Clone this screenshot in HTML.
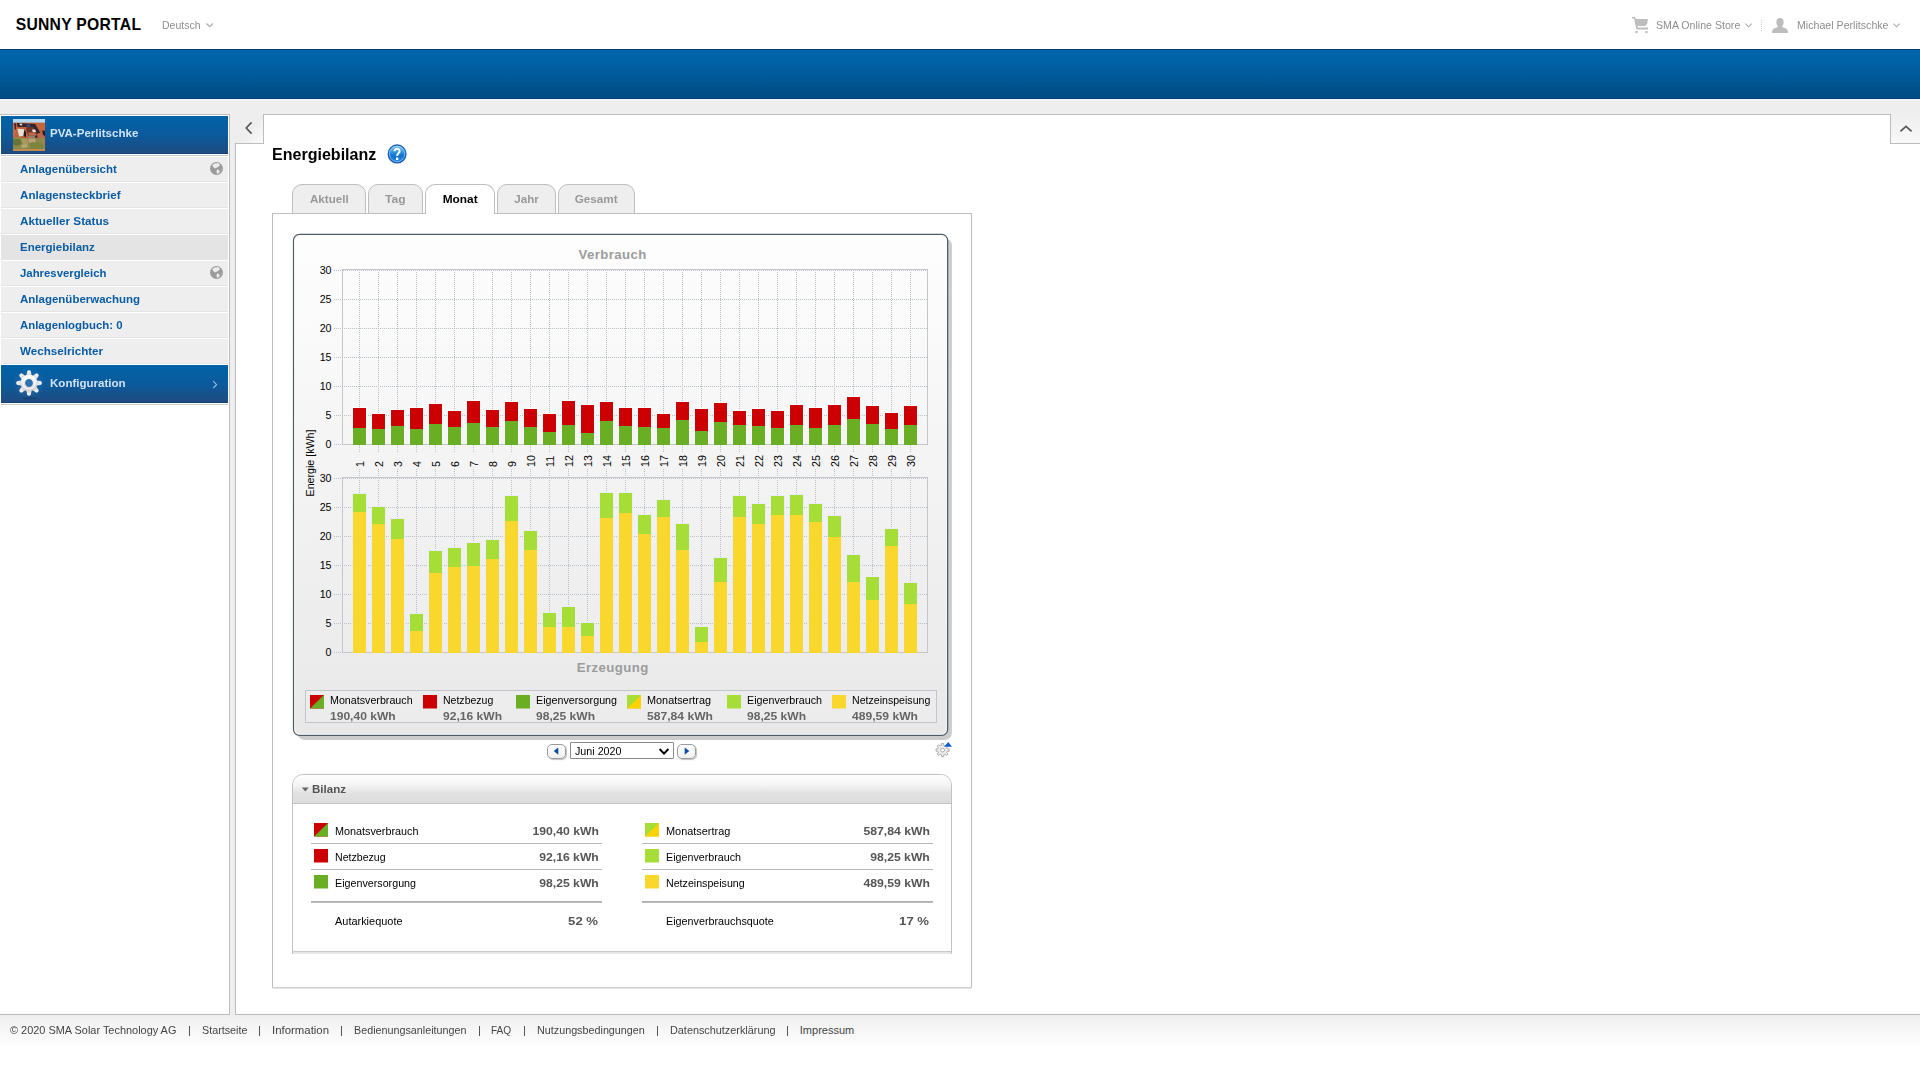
<!DOCTYPE html>
<html lang="de"><head><meta charset="utf-8"><title>Sunny Portal - Energiebilanz</title>
<style>
html,body{margin:0;padding:0;}
body{width:1920px;height:1080px;overflow:hidden;background:#fff;font-family:"Liberation Sans", sans-serif;position:relative;}
.a{position:absolute;box-sizing:border-box;}
.t{position:absolute;white-space:nowrap;font-family:"Liberation Sans", sans-serif;}
svg{position:absolute;overflow:visible;}
</style></head><body>
<div class="a" style="left:0px;top:99px;width:1920px;height:916px;background:#eeeeee;"></div>
<div class="t" style="left:15.70px;transform-origin:0 0;top:17.31px;font-size:15.7px;line-height:15.7px;font-weight:bold;color:#000;letter-spacing:0.27px;">SUNNY PORTAL</div>
<div class="t" style="left:162.00px;transform-origin:0 0;top:20.19px;font-size:11px;line-height:11px;font-weight:normal;color:#8e8e8e;transform:scaleX(0.9541);">Deutsch</div>
<svg style="left:205px;top:21px" width="10" height="8" viewBox="0 0 10 8"><path d="M1.5 2.5 L4.7 5.7 L7.9 2.5" fill="none" stroke="#aaa" stroke-width="1.1"/></svg>
<svg style="left:1631px;top:16px" width="18" height="18" viewBox="0 0 18 18"><g fill="#bdbdbd">
<path d="M1 1 H4.2 L4.9 3.1 H17 L16.2 7.6 Q15.6 9.9 13.6 9.9 H6.5 L6.9 11.6 H17 V13.6 H5.5 L3 2.6 H1 Z"/>
<rect x="4.4" y="15" width="2.3" height="2.2" rx=".6"/><rect x="14.3" y="15" width="2.3" height="2.2" rx=".6"/></g></svg>
<div class="t" style="left:1656.20px;transform-origin:0 0;top:19.69px;font-size:11px;line-height:11px;font-weight:normal;color:#8e8e8e;transform:scaleX(0.9642);">SMA Online Store</div>
<svg style="left:1744px;top:21px" width="10" height="8" viewBox="0 0 10 8"><path d="M1.5 2.7 L4.6 5.8 L7.7 2.7" fill="none" stroke="#aaa" stroke-width="1.1"/></svg>
<div class="a" style="left:1761px;top:20px;width:1px;height:11px;background:repeating-linear-gradient(to bottom,#ccc 0,#ccc 1px,transparent 1px,transparent 2px);"></div>
<svg style="left:1771px;top:17px" width="18" height="17" viewBox="0 0 18 17"><g fill="#bdbdbd">
<ellipse cx="9" cy="5.3" rx="3.6" ry="4.3"/>
<path d="M1 16 C1 12 3 11.2 6.4 10.2 L7 8 H11 L11.6 10.2 C15 11.2 17 12 17 16 Z"/></g></svg>
<div class="t" style="left:1796.80px;transform-origin:0 0;top:19.69px;font-size:11px;line-height:11px;font-weight:normal;color:#8e8e8e;transform:scaleX(0.9657);">Michael Perlitschke</div>
<svg style="left:1892px;top:21px" width="10" height="8" viewBox="0 0 10 8"><path d="M1.5 2.7 L4.6 5.8 L7.7 2.7" fill="none" stroke="#aaa" stroke-width="1.1"/></svg>
<div class="a" style="left:0px;top:49px;width:1920px;height:50px;background:linear-gradient(to bottom,#0065aa 0,#0061a4 30%,#004a82 100%);border-top:1px solid #003c72;border-bottom:1px solid #003a70;"></div>
<div class="a" style="left:0px;top:99px;width:1920px;height:1px;background:#f9f8f6;"></div>
<div class="a" style="left:0px;top:114px;width:230px;height:901px;background:#fff;border:1px solid #bdbdbd;border-left:none;"></div>
<div class="a" style="left:1px;top:116px;width:227px;height:38px;background:linear-gradient(to bottom,#0062a7 0,#0b5a9c 50%,#1e4b81 96%,#0f3a70 100%);"></div>
<svg style="left:13px;top:119px;overflow:hidden" width="32" height="32" viewBox="0 0 32 32">
<defs><filter id="bl" x="-10%" y="-10%" width="120%" height="120%"><feGaussianBlur stdDeviation="0.55"/></filter>
<clipPath id="tc"><rect width="32" height="32"/></clipPath></defs>
<g clip-path="url(#tc)"><g filter="url(#bl)">
<rect x="-2" y="-2" width="36" height="36" fill="#c0623c"/>
<rect x="-2" y="-2" width="36" height="5.6" fill="#b6daf4"/>
<path d="M22 5 L34 4.5 L34 12 L28 11 Z" fill="#c8643a"/>
<path d="M-1 4 L4 4 L3 12 L-1 20 Z" fill="#cc6a40"/>
<path d="M1 4.2 L3.2 4.2 L3 10.8 L1.8 10.5 Z" fill="#4a2820"/>
<path d="M3.9 4 L22.2 5.1 L27.2 13.7 L24.5 14.9 L19.8 7.9 L4.7 7.9 Z" fill="#33282e"/>
<path d="M6.5 4.6 L9.2 4.8 L9 6.4 L7 6.3 Z" fill="#e8dcdc"/>
<path d="M13.5 5.2 L17 5.4 L17.4 8.6 L14 8.4 Z" fill="#3c4c78"/>
<path d="M13.6 7.9 L19.8 7.9 L24.5 14.9 L22.2 18.4 L15.2 16.8 L13.2 10.6 Z" fill="#6a3428"/>
<path d="M19 10.6 L22.2 10.6 L23 12.9 L19.8 13.3 Z" fill="#f2e4e4"/>
<path d="M15 13.6 L22 13.4 L23.5 16 L16 16.6 Z" fill="#c86848"/>
<path d="M15.5 16.5 L23 16.2 L23.4 18.4 L16 18.6 Z" fill="#8a8478"/>
<path d="M4.3 9.8 L11.3 10.2 L10.5 16.8 L6.2 17.6 Z" fill="#e6e2da"/>
<path d="M11.3 10.6 L13.2 13.7 L12.8 18.4 L10.5 16.8 Z" fill="#241c22"/>
<path d="M22 17 L24 16.4 L24.6 18.6 L22.6 18.8 Z" fill="#2a1c1c"/>
<path d="M29.2 11.4 L33 12.1 L33 18.4 L30 15.3 Z" fill="#2a1a1a"/>
<path d="M24.5 14.9 L27.2 13.7 L31 20 L27 20 Z" fill="#b86a50"/>
<path d="M-1 19 L6 18 L12 19.5 L20 19 L27 19.6 L33 19 L33 31 L-1 31 Z" fill="#8c8a4c"/>
<path d="M0 20 L7 20 L9 25 L3 27 L0 25 Z" fill="#6a7434"/>
<path d="M8 19 L14 20 L15 25 L10 26 Z" fill="#a89a5c"/>
<path d="M15 19.5 L22 19.4 L23 23 L16 24 Z" fill="#b89e78"/>
<path d="M16 24 L25 23 L31 26 L30 30 L18 30 Z" fill="#7c8440"/>
<path d="M30 20 L33 20 L33 27 L30.5 26 Z" fill="#c07848"/>
<path d="M8 26 L14 25 L15 28 L9 29 Z" fill="#b4a878"/>
<rect x="-2" y="30" width="36" height="4" fill="#c48a4c"/>
</g></g></svg>
<div class="t" style="left:50.40px;transform-origin:0 0;top:128.49px;font-size:11px;line-height:11px;font-weight:bold;color:#d0e4f6;transform:scaleX(1.0492);">PVA-Perlitschke</div>
<div class="a" style="left:1px;top:157px;width:227px;height:24px;background:#eeeeee;"></div>
<div class="a" style="left:1px;top:181px;width:227px;height:1px;background:#e4e4e4;"></div>
<div class="t" style="left:20.10px;transform-origin:0 0;top:163.59px;font-size:11px;line-height:11px;font-weight:bold;color:#0a5ca5;transform:scaleX(1.0420);">Anlagenübersicht</div>
<div class="a" style="left:1px;top:183px;width:227px;height:24px;background:#eeeeee;"></div>
<div class="a" style="left:1px;top:207px;width:227px;height:1px;background:#e4e4e4;"></div>
<div class="t" style="left:20.10px;transform-origin:0 0;top:189.59px;font-size:11px;line-height:11px;font-weight:bold;color:#0a5ca5;transform:scaleX(1.0550);">Anlagensteckbrief</div>
<div class="a" style="left:1px;top:209px;width:227px;height:24px;background:#eeeeee;"></div>
<div class="a" style="left:1px;top:233px;width:227px;height:1px;background:#e4e4e4;"></div>
<div class="t" style="left:20.10px;transform-origin:0 0;top:215.59px;font-size:11px;line-height:11px;font-weight:bold;color:#0a5ca5;transform:scaleX(1.0640);">Aktueller Status</div>
<div class="a" style="left:1px;top:235px;width:227px;height:24px;background:#e4e4e4;"></div>
<div class="a" style="left:1px;top:259px;width:227px;height:1px;background:#e4e4e4;"></div>
<div class="t" style="left:20.10px;transform-origin:0 0;top:241.59px;font-size:11px;line-height:11px;font-weight:bold;color:#0a5ca5;transform:scaleX(1.0460);">Energiebilanz</div>
<div class="a" style="left:1px;top:261px;width:227px;height:24px;background:#eeeeee;"></div>
<div class="a" style="left:1px;top:285px;width:227px;height:1px;background:#e4e4e4;"></div>
<div class="t" style="left:20.10px;transform-origin:0 0;top:267.59px;font-size:11px;line-height:11px;font-weight:bold;color:#0a5ca5;transform:scaleX(1.0326);">Jahresvergleich</div>
<div class="a" style="left:1px;top:287px;width:227px;height:24px;background:#eeeeee;"></div>
<div class="a" style="left:1px;top:311px;width:227px;height:1px;background:#e4e4e4;"></div>
<div class="t" style="left:20.10px;transform-origin:0 0;top:293.59px;font-size:11px;line-height:11px;font-weight:bold;color:#0a5ca5;transform:scaleX(1.0453);">Anlagenüberwachung</div>
<div class="a" style="left:1px;top:313px;width:227px;height:24px;background:#eeeeee;"></div>
<div class="a" style="left:1px;top:337px;width:227px;height:1px;background:#e4e4e4;"></div>
<div class="t" style="left:20.10px;transform-origin:0 0;top:319.59px;font-size:11px;line-height:11px;font-weight:bold;color:#0a5ca5;transform:scaleX(1.0354);">Anlagenlogbuch: 0</div>
<div class="a" style="left:1px;top:339px;width:227px;height:24px;background:#eeeeee;"></div>
<div class="a" style="left:1px;top:363px;width:227px;height:1px;background:#e4e4e4;"></div>
<div class="t" style="left:20.10px;transform-origin:0 0;top:345.59px;font-size:11px;line-height:11px;font-weight:bold;color:#0a5ca5;transform:scaleX(1.0564);">Wechselrichter</div>
<div class="a" style="left:1px;top:155px;width:227px;height:1px;background:#c8c8c8;"></div>
<svg style="left:210px;top:162px" width="13" height="13" viewBox="0 0 13 13"><circle cx="6.5" cy="6.5" r="6.5" fill="#9b9b9b"/>
<path d="M2.3 2.9 L4.6 1.6 L8.3 0.9 L10.2 3.2 L7.2 5.6 L4.8 6.6 L3 4.8 Z" fill="#ececec"/>
<path d="M7 7.3 L9.8 8.8 L9.3 10.7 L7 12.1 L6.5 9.7 Z" fill="#ececec"/>
<path d="M11.3 6 L12 7 L11.5 8 Z" fill="#cfcfcf"/></svg>
<svg style="left:210px;top:266px" width="13" height="13" viewBox="0 0 13 13"><circle cx="6.5" cy="6.5" r="6.5" fill="#9b9b9b"/>
<path d="M2.3 2.9 L4.6 1.6 L8.3 0.9 L10.2 3.2 L7.2 5.6 L4.8 6.6 L3 4.8 Z" fill="#ececec"/>
<path d="M7 7.3 L9.8 8.8 L9.3 10.7 L7 12.1 L6.5 9.7 Z" fill="#ececec"/>
<path d="M11.3 6 L12 7 L11.5 8 Z" fill="#cfcfcf"/></svg>
<div class="a" style="left:1px;top:365px;width:227px;height:38px;background:linear-gradient(to bottom,#0062a7 0,#0b5a9c 50%,#1e4b81 96%,#0f3a70 100%);"></div>
<div class="a" style="left:1px;top:404px;width:227px;height:1px;background:#c8c8c8;"></div>
<svg style="left:13px;top:367px" width="32" height="34" viewBox="-16 -16 32 34">
<defs><linearGradient id="gg" x1="0" y1="0" x2="0" y2="1"><stop offset="0" stop-color="#ffffff"/><stop offset="1" stop-color="#cfcfcf"/></linearGradient>
<radialGradient id="gs"><stop offset="0" stop-color="#4f86c0" stop-opacity=".6"/><stop offset="1" stop-color="#4f86c0" stop-opacity="0"/></radialGradient></defs>
<circle r="16" fill="url(#gs)"/>
<ellipse cx="0.5" cy="15.2" rx="7" ry="1" fill="#0a2f5c" opacity=".35"/>
<g fill="url(#gg)"><path d="M-2.7 -7 L-1.7 -12.1 Q0 -13.6 1.7 -12.1 L2.7 -7 Z" transform="rotate(0)"/><path d="M-2.7 -7 L-1.7 -12.1 Q0 -13.6 1.7 -12.1 L2.7 -7 Z" transform="rotate(45)"/><path d="M-2.7 -7 L-1.7 -12.1 Q0 -13.6 1.7 -12.1 L2.7 -7 Z" transform="rotate(90)"/><path d="M-2.7 -7 L-1.7 -12.1 Q0 -13.6 1.7 -12.1 L2.7 -7 Z" transform="rotate(135)"/><path d="M-2.7 -7 L-1.7 -12.1 Q0 -13.6 1.7 -12.1 L2.7 -7 Z" transform="rotate(180)"/><path d="M-2.7 -7 L-1.7 -12.1 Q0 -13.6 1.7 -12.1 L2.7 -7 Z" transform="rotate(225)"/><path d="M-2.7 -7 L-1.7 -12.1 Q0 -13.6 1.7 -12.1 L2.7 -7 Z" transform="rotate(270)"/><path d="M-2.7 -7 L-1.7 -12.1 Q0 -13.6 1.7 -12.1 L2.7 -7 Z" transform="rotate(315)"/><path d="M0 -8.3 A8.3 8.3 0 1 0 0.01 -8.3 Z M0 -3.9 A3.9 3.9 0 1 1 -0.01 -3.9 Z" fill-rule="evenodd"/></g>
<circle r="6" fill="none" stroke="#fff" stroke-width="1.2" opacity=".7"/>
</svg>
<div class="t" style="left:50.40px;transform-origin:0 0;top:378.29px;font-size:11px;line-height:11px;font-weight:bold;color:#d0e4f6;transform:scaleX(1.0487);">Konfiguration</div>
<svg style="left:210px;top:379px" width="10" height="12" viewBox="0 0 10 12"><path d="M3.2 2.2 L6.6 5.7 L3.2 9.2" fill="none" stroke="#9fc0e0" stroke-width="1.1"/></svg>
<div class="a" style="left:263px;top:114px;width:1657px;height:901px;background:#fff;border-top:1px solid #bdbdbd;"></div>
<div class="a" style="left:235px;top:143px;width:29px;height:872px;background:#fff;border-left:1px solid #bdbdbd;border-top:1px solid #bdbdbd;"></div>
<div class="a" style="left:236px;top:115px;width:27px;height:28px;background:linear-gradient(135deg,rgba(255,255,255,0) 55%,#fbfbfb 100%);"></div>
<div class="a" style="left:263px;top:114px;width:1px;height:30px;background:#bdbdbd;"></div>
<div class="a" style="left:235px;top:1014px;width:1685px;height:1px;background:#bdbdbd;"></div>
<div class="a" style="left:0px;top:1014px;width:230px;height:1px;background:#bdbdbd;"></div>
<div class="a" style="left:1890px;top:114px;width:30px;height:30px;background:linear-gradient(to bottom,#eeeeee,#f9f9f9);border-left:1px solid #bdbdbd;border-bottom:1px solid #bdbdbd;"></div>
<svg style="left:1898px;top:123px" width="16" height="12" viewBox="0 0 16 12"><path d="M2.4 8.4 L8 3.4 L13.6 8.4" fill="none" stroke="#555" stroke-width="1.6"/></svg>
<svg style="left:242px;top:120px" width="14" height="16" viewBox="0 0 14 16"><path d="M9.6 2.4 L4.2 8 L9.6 13.6" fill="none" stroke="#555" stroke-width="1.6"/></svg>
<div class="t" style="left:272.20px;transform-origin:0 0;top:145.61px;font-size:17px;line-height:17px;font-weight:bold;color:#000;transform:scaleX(0.9437);">Energiebilanz</div>
<svg style="left:386px;top:143px" width="22" height="22" viewBox="0 0 22 22">
<defs><linearGradient id="hq" x1="0" y1="0" x2="0" y2="1"><stop offset="0" stop-color="#9fdcfb"/><stop offset="0.3" stop-color="#45a4ea"/><stop offset="0.6" stop-color="#0f74cf"/><stop offset="1" stop-color="#2a86d8"/></linearGradient></defs>
<ellipse cx="11.1" cy="19.6" rx="7.5" ry="1.4" fill="#000" opacity=".07"/>
<circle cx="11.1" cy="10.9" r="8.9" fill="url(#hq)" stroke="#1d5db2" stroke-width="1.3"/>
<circle cx="11.1" cy="10.9" r="7.7" fill="none" stroke="#a8dcfa" stroke-width=".8" opacity=".75"/>
<path d="M8.6 8.2 C8.6 4.9 13.6 4.9 13.6 8 C13.6 10.2 11.1 10.3 11.1 12.9" fill="none" stroke="#1a4e90" stroke-width="2" opacity=".35" transform="translate(0,-0.5)"/>
<path d="M8.6 8.2 C8.6 4.9 13.6 4.9 13.6 8 C13.6 10.2 11.1 10.3 11.1 12.9" fill="none" stroke="#fff" stroke-width="2"/>
<rect x="10" y="14.6" width="2.3" height="2.4" rx=".5" fill="#fff"/></svg>
<div class="a" style="left:272px;top:213px;width:700px;height:775px;background:#fff;border:1px solid #bebebe;"></div>
<div class="a" style="left:273px;top:987px;width:698px;height:2px;background:linear-gradient(to bottom,#c8c8c8,#ececec);"></div>
<div class="a" style="left:292px;top:184px;width:74px;height:30px;background:#eeeeee;border:1px solid #bebebe;border-bottom:1px solid #bebebe;border-radius:10px 10px 0 0;"></div>
<div class="t" style="left:310.66px;transform-origin:50% 0;top:193.79px;font-size:11px;line-height:11px;font-weight:bold;color:#999;transform:scaleX(1.0580);">Aktuell</div>
<div class="a" style="left:368px;top:184px;width:55px;height:30px;background:#eeeeee;border:1px solid #bebebe;border-bottom:1px solid #bebebe;border-radius:10px 10px 0 0;"></div>
<div class="t" style="left:386.13px;transform-origin:50% 0;top:193.79px;font-size:11px;line-height:11px;font-weight:bold;color:#999;transform:scaleX(1.0994);">Tag</div>
<div class="a" style="left:425px;top:184px;width:70px;height:30px;background:#fff;border:1px solid #bebebe;border-bottom:none;border-radius:10px 10px 0 0;"></div>
<div class="t" style="left:443.81px;transform-origin:50% 0;top:193.79px;font-size:11px;line-height:11px;font-weight:bold;color:#000;transform:scaleX(1.0809);">Monat</div>
<div class="a" style="left:497px;top:184px;width:59px;height:30px;background:#eeeeee;border:1px solid #bebebe;border-bottom:1px solid #bebebe;border-radius:10px 10px 0 0;"></div>
<div class="t" style="left:514.88px;transform-origin:50% 0;top:193.79px;font-size:11px;line-height:11px;font-weight:bold;color:#999;transform:scaleX(1.0545);">Jahr</div>
<div class="a" style="left:558px;top:184px;width:77px;height:30px;background:#eeeeee;border:1px solid #bebebe;border-bottom:1px solid #bebebe;border-radius:10px 10px 0 0;"></div>
<div class="t" style="left:576.32px;transform-origin:50% 0;top:193.79px;font-size:11px;line-height:11px;font-weight:bold;color:#999;transform:scaleX(1.0656);">Gesamt</div>
<div class="a" style="left:0px;top:1015px;width:1920px;height:32px;background:linear-gradient(to bottom,#eeeeee 0,#f4f4f4 35%,#ffffff 100%);"></div>
<div class="t" style="left:10.30px;transform-origin:0 0;top:1024.99px;font-size:11px;line-height:11px;font-weight:normal;color:#444;transform:scaleX(0.9935);">© 2020 SMA Solar Technology AG</div>
<div class="a" style="left:189px;top:1026px;width:1px;height:10px;background:#555;"></div>
<div class="t" style="left:201.60px;transform-origin:0 0;top:1024.99px;font-size:11px;line-height:11px;font-weight:normal;color:#444;transform:scaleX(0.9771);">Startseite</div>
<div class="a" style="left:259px;top:1026px;width:1px;height:10px;background:#555;"></div>
<div class="t" style="left:272.00px;transform-origin:0 0;top:1024.99px;font-size:11px;line-height:11px;font-weight:normal;color:#444;transform:scaleX(1.0359);">Information</div>
<div class="a" style="left:341px;top:1026px;width:1px;height:10px;background:#555;"></div>
<div class="t" style="left:354.00px;transform-origin:0 0;top:1024.99px;font-size:11px;line-height:11px;font-weight:normal;color:#444;transform:scaleX(0.9784);">Bedienungsanleitungen</div>
<div class="a" style="left:479px;top:1026px;width:1px;height:10px;background:#555;"></div>
<div class="t" style="left:491.30px;transform-origin:0 0;top:1024.99px;font-size:11px;line-height:11px;font-weight:normal;color:#444;transform:scaleX(0.9180);">FAQ</div>
<div class="a" style="left:524px;top:1026px;width:1px;height:10px;background:#555;"></div>
<div class="t" style="left:536.80px;transform-origin:0 0;top:1024.99px;font-size:11px;line-height:11px;font-weight:normal;color:#444;transform:scaleX(0.9793);">Nutzungsbedingungen</div>
<div class="a" style="left:657px;top:1026px;width:1px;height:10px;background:#555;"></div>
<div class="t" style="left:669.50px;transform-origin:0 0;top:1024.99px;font-size:11px;line-height:11px;font-weight:normal;color:#444;transform:scaleX(0.9860);">Datenschutzerklärung</div>
<div class="a" style="left:787px;top:1026px;width:1px;height:10px;background:#555;"></div>
<div class="t" style="left:799.80px;transform-origin:0 0;top:1024.99px;font-size:11px;line-height:11px;font-weight:normal;color:#444;">Impressum</div>
<svg style="left:0;top:0" width="1920" height="1080" viewBox="0 0 1920 1080">
<defs><linearGradient id="pg" x1="0" y1="0" x2="0" y2="1"><stop offset="0" stop-color="#fefefe"/><stop offset="1" stop-color="#e8e8e8"/></linearGradient></defs>
<rect x="297.4" y="238.4" width="654.5" height="501.5" rx="7" fill="#cccccc"/>
<rect x="293.5" y="234.4" width="654.1" height="501" rx="6" fill="url(#pg)" stroke="#4e5b68" stroke-width="1.25"/><rect x="294.7" y="235.6" width="651.7" height="498.6" rx="5" fill="none" stroke="#fff" stroke-opacity=".6" stroke-width="1"/>
<g shape-rendering="crispEdges">
<rect x="342" y="269" width="586" height="176" fill="#ffffff" fill-opacity="0.06"/>
<rect x="342" y="477" width="586" height="176" fill="#ffffff" fill-opacity="0.06"/>
<line x1="334" y1="270.5" x2="341" y2="270.5" stroke="#bac0c7" stroke-width="1" stroke-dasharray="1 1"/>
<line x1="334" y1="299.5" x2="341" y2="299.5" stroke="#bac0c7" stroke-width="1" stroke-dasharray="1 1"/>
<line x1="344" y1="299.5" x2="927" y2="299.5" stroke="#bac0c7" stroke-width="1" stroke-dasharray="1 1"/>
<line x1="334" y1="328.5" x2="341" y2="328.5" stroke="#bac0c7" stroke-width="1" stroke-dasharray="1 1"/>
<line x1="344" y1="328.5" x2="927" y2="328.5" stroke="#bac0c7" stroke-width="1" stroke-dasharray="1 1"/>
<line x1="334" y1="357.5" x2="341" y2="357.5" stroke="#bac0c7" stroke-width="1" stroke-dasharray="1 1"/>
<line x1="344" y1="357.5" x2="927" y2="357.5" stroke="#bac0c7" stroke-width="1" stroke-dasharray="1 1"/>
<line x1="334" y1="386.5" x2="341" y2="386.5" stroke="#bac0c7" stroke-width="1" stroke-dasharray="1 1"/>
<line x1="344" y1="386.5" x2="927" y2="386.5" stroke="#bac0c7" stroke-width="1" stroke-dasharray="1 1"/>
<line x1="334" y1="415.5" x2="341" y2="415.5" stroke="#bac0c7" stroke-width="1" stroke-dasharray="1 1"/>
<line x1="344" y1="415.5" x2="927" y2="415.5" stroke="#bac0c7" stroke-width="1" stroke-dasharray="1 1"/>
<line x1="334" y1="444.5" x2="341" y2="444.5" stroke="#bac0c7" stroke-width="1" stroke-dasharray="1 1"/>
<line x1="334" y1="478.5" x2="341" y2="478.5" stroke="#bac0c7" stroke-width="1" stroke-dasharray="1 1"/>
<line x1="334" y1="507.5" x2="341" y2="507.5" stroke="#bac0c7" stroke-width="1" stroke-dasharray="1 1"/>
<line x1="344" y1="507.5" x2="927" y2="507.5" stroke="#bac0c7" stroke-width="1" stroke-dasharray="1 1"/>
<line x1="334" y1="536.5" x2="341" y2="536.5" stroke="#bac0c7" stroke-width="1" stroke-dasharray="1 1"/>
<line x1="344" y1="536.5" x2="927" y2="536.5" stroke="#bac0c7" stroke-width="1" stroke-dasharray="1 1"/>
<line x1="334" y1="565.5" x2="341" y2="565.5" stroke="#bac0c7" stroke-width="1" stroke-dasharray="1 1"/>
<line x1="344" y1="565.5" x2="927" y2="565.5" stroke="#bac0c7" stroke-width="1" stroke-dasharray="1 1"/>
<line x1="334" y1="594.5" x2="341" y2="594.5" stroke="#bac0c7" stroke-width="1" stroke-dasharray="1 1"/>
<line x1="344" y1="594.5" x2="927" y2="594.5" stroke="#bac0c7" stroke-width="1" stroke-dasharray="1 1"/>
<line x1="334" y1="623.5" x2="341" y2="623.5" stroke="#bac0c7" stroke-width="1" stroke-dasharray="1 1"/>
<line x1="344" y1="623.5" x2="927" y2="623.5" stroke="#bac0c7" stroke-width="1" stroke-dasharray="1 1"/>
<line x1="334" y1="652.5" x2="341" y2="652.5" stroke="#bac0c7" stroke-width="1" stroke-dasharray="1 1"/>
<line x1="359.5" y1="272" x2="359.5" y2="444" stroke="#bac0c7" stroke-width="1" stroke-dasharray="1 1"/>
<line x1="359.5" y1="445" x2="359.5" y2="452" stroke="#bac0c7" stroke-width="1" stroke-dasharray="1 1"/>
<line x1="359.5" y1="469" x2="359.5" y2="476" stroke="#bac0c7" stroke-width="1" stroke-dasharray="1 1"/>
<line x1="359.5" y1="480" x2="359.5" y2="652" stroke="#bac0c7" stroke-width="1" stroke-dasharray="1 1"/>
<line x1="378.5" y1="272" x2="378.5" y2="444" stroke="#bac0c7" stroke-width="1" stroke-dasharray="1 1"/>
<line x1="378.5" y1="445" x2="378.5" y2="452" stroke="#bac0c7" stroke-width="1" stroke-dasharray="1 1"/>
<line x1="378.5" y1="469" x2="378.5" y2="476" stroke="#bac0c7" stroke-width="1" stroke-dasharray="1 1"/>
<line x1="378.5" y1="480" x2="378.5" y2="652" stroke="#bac0c7" stroke-width="1" stroke-dasharray="1 1"/>
<line x1="397.5" y1="272" x2="397.5" y2="444" stroke="#bac0c7" stroke-width="1" stroke-dasharray="1 1"/>
<line x1="397.5" y1="445" x2="397.5" y2="452" stroke="#bac0c7" stroke-width="1" stroke-dasharray="1 1"/>
<line x1="397.5" y1="469" x2="397.5" y2="476" stroke="#bac0c7" stroke-width="1" stroke-dasharray="1 1"/>
<line x1="397.5" y1="480" x2="397.5" y2="652" stroke="#bac0c7" stroke-width="1" stroke-dasharray="1 1"/>
<line x1="416.5" y1="272" x2="416.5" y2="444" stroke="#bac0c7" stroke-width="1" stroke-dasharray="1 1"/>
<line x1="416.5" y1="445" x2="416.5" y2="452" stroke="#bac0c7" stroke-width="1" stroke-dasharray="1 1"/>
<line x1="416.5" y1="469" x2="416.5" y2="476" stroke="#bac0c7" stroke-width="1" stroke-dasharray="1 1"/>
<line x1="416.5" y1="480" x2="416.5" y2="652" stroke="#bac0c7" stroke-width="1" stroke-dasharray="1 1"/>
<line x1="435.5" y1="272" x2="435.5" y2="444" stroke="#bac0c7" stroke-width="1" stroke-dasharray="1 1"/>
<line x1="435.5" y1="445" x2="435.5" y2="452" stroke="#bac0c7" stroke-width="1" stroke-dasharray="1 1"/>
<line x1="435.5" y1="469" x2="435.5" y2="476" stroke="#bac0c7" stroke-width="1" stroke-dasharray="1 1"/>
<line x1="435.5" y1="480" x2="435.5" y2="652" stroke="#bac0c7" stroke-width="1" stroke-dasharray="1 1"/>
<line x1="454.5" y1="272" x2="454.5" y2="444" stroke="#bac0c7" stroke-width="1" stroke-dasharray="1 1"/>
<line x1="454.5" y1="445" x2="454.5" y2="452" stroke="#bac0c7" stroke-width="1" stroke-dasharray="1 1"/>
<line x1="454.5" y1="469" x2="454.5" y2="476" stroke="#bac0c7" stroke-width="1" stroke-dasharray="1 1"/>
<line x1="454.5" y1="480" x2="454.5" y2="652" stroke="#bac0c7" stroke-width="1" stroke-dasharray="1 1"/>
<line x1="473.5" y1="272" x2="473.5" y2="444" stroke="#bac0c7" stroke-width="1" stroke-dasharray="1 1"/>
<line x1="473.5" y1="445" x2="473.5" y2="452" stroke="#bac0c7" stroke-width="1" stroke-dasharray="1 1"/>
<line x1="473.5" y1="469" x2="473.5" y2="476" stroke="#bac0c7" stroke-width="1" stroke-dasharray="1 1"/>
<line x1="473.5" y1="480" x2="473.5" y2="652" stroke="#bac0c7" stroke-width="1" stroke-dasharray="1 1"/>
<line x1="492.5" y1="272" x2="492.5" y2="444" stroke="#bac0c7" stroke-width="1" stroke-dasharray="1 1"/>
<line x1="492.5" y1="445" x2="492.5" y2="452" stroke="#bac0c7" stroke-width="1" stroke-dasharray="1 1"/>
<line x1="492.5" y1="469" x2="492.5" y2="476" stroke="#bac0c7" stroke-width="1" stroke-dasharray="1 1"/>
<line x1="492.5" y1="480" x2="492.5" y2="652" stroke="#bac0c7" stroke-width="1" stroke-dasharray="1 1"/>
<line x1="511.5" y1="272" x2="511.5" y2="444" stroke="#bac0c7" stroke-width="1" stroke-dasharray="1 1"/>
<line x1="511.5" y1="445" x2="511.5" y2="452" stroke="#bac0c7" stroke-width="1" stroke-dasharray="1 1"/>
<line x1="511.5" y1="469" x2="511.5" y2="476" stroke="#bac0c7" stroke-width="1" stroke-dasharray="1 1"/>
<line x1="511.5" y1="480" x2="511.5" y2="652" stroke="#bac0c7" stroke-width="1" stroke-dasharray="1 1"/>
<line x1="530.5" y1="272" x2="530.5" y2="444" stroke="#bac0c7" stroke-width="1" stroke-dasharray="1 1"/>
<line x1="530.5" y1="445" x2="530.5" y2="452" stroke="#bac0c7" stroke-width="1" stroke-dasharray="1 1"/>
<line x1="530.5" y1="469" x2="530.5" y2="476" stroke="#bac0c7" stroke-width="1" stroke-dasharray="1 1"/>
<line x1="530.5" y1="480" x2="530.5" y2="652" stroke="#bac0c7" stroke-width="1" stroke-dasharray="1 1"/>
<line x1="549.5" y1="272" x2="549.5" y2="444" stroke="#bac0c7" stroke-width="1" stroke-dasharray="1 1"/>
<line x1="549.5" y1="445" x2="549.5" y2="452" stroke="#bac0c7" stroke-width="1" stroke-dasharray="1 1"/>
<line x1="549.5" y1="469" x2="549.5" y2="476" stroke="#bac0c7" stroke-width="1" stroke-dasharray="1 1"/>
<line x1="549.5" y1="480" x2="549.5" y2="652" stroke="#bac0c7" stroke-width="1" stroke-dasharray="1 1"/>
<line x1="568.5" y1="272" x2="568.5" y2="444" stroke="#bac0c7" stroke-width="1" stroke-dasharray="1 1"/>
<line x1="568.5" y1="445" x2="568.5" y2="452" stroke="#bac0c7" stroke-width="1" stroke-dasharray="1 1"/>
<line x1="568.5" y1="469" x2="568.5" y2="476" stroke="#bac0c7" stroke-width="1" stroke-dasharray="1 1"/>
<line x1="568.5" y1="480" x2="568.5" y2="652" stroke="#bac0c7" stroke-width="1" stroke-dasharray="1 1"/>
<line x1="587.5" y1="272" x2="587.5" y2="444" stroke="#bac0c7" stroke-width="1" stroke-dasharray="1 1"/>
<line x1="587.5" y1="445" x2="587.5" y2="452" stroke="#bac0c7" stroke-width="1" stroke-dasharray="1 1"/>
<line x1="587.5" y1="469" x2="587.5" y2="476" stroke="#bac0c7" stroke-width="1" stroke-dasharray="1 1"/>
<line x1="587.5" y1="480" x2="587.5" y2="652" stroke="#bac0c7" stroke-width="1" stroke-dasharray="1 1"/>
<line x1="606.5" y1="272" x2="606.5" y2="444" stroke="#bac0c7" stroke-width="1" stroke-dasharray="1 1"/>
<line x1="606.5" y1="445" x2="606.5" y2="452" stroke="#bac0c7" stroke-width="1" stroke-dasharray="1 1"/>
<line x1="606.5" y1="469" x2="606.5" y2="476" stroke="#bac0c7" stroke-width="1" stroke-dasharray="1 1"/>
<line x1="606.5" y1="480" x2="606.5" y2="652" stroke="#bac0c7" stroke-width="1" stroke-dasharray="1 1"/>
<line x1="625.5" y1="272" x2="625.5" y2="444" stroke="#bac0c7" stroke-width="1" stroke-dasharray="1 1"/>
<line x1="625.5" y1="445" x2="625.5" y2="452" stroke="#bac0c7" stroke-width="1" stroke-dasharray="1 1"/>
<line x1="625.5" y1="469" x2="625.5" y2="476" stroke="#bac0c7" stroke-width="1" stroke-dasharray="1 1"/>
<line x1="625.5" y1="480" x2="625.5" y2="652" stroke="#bac0c7" stroke-width="1" stroke-dasharray="1 1"/>
<line x1="644.5" y1="272" x2="644.5" y2="444" stroke="#bac0c7" stroke-width="1" stroke-dasharray="1 1"/>
<line x1="644.5" y1="445" x2="644.5" y2="452" stroke="#bac0c7" stroke-width="1" stroke-dasharray="1 1"/>
<line x1="644.5" y1="469" x2="644.5" y2="476" stroke="#bac0c7" stroke-width="1" stroke-dasharray="1 1"/>
<line x1="644.5" y1="480" x2="644.5" y2="652" stroke="#bac0c7" stroke-width="1" stroke-dasharray="1 1"/>
<line x1="663.5" y1="272" x2="663.5" y2="444" stroke="#bac0c7" stroke-width="1" stroke-dasharray="1 1"/>
<line x1="663.5" y1="445" x2="663.5" y2="452" stroke="#bac0c7" stroke-width="1" stroke-dasharray="1 1"/>
<line x1="663.5" y1="469" x2="663.5" y2="476" stroke="#bac0c7" stroke-width="1" stroke-dasharray="1 1"/>
<line x1="663.5" y1="480" x2="663.5" y2="652" stroke="#bac0c7" stroke-width="1" stroke-dasharray="1 1"/>
<line x1="682.5" y1="272" x2="682.5" y2="444" stroke="#bac0c7" stroke-width="1" stroke-dasharray="1 1"/>
<line x1="682.5" y1="445" x2="682.5" y2="452" stroke="#bac0c7" stroke-width="1" stroke-dasharray="1 1"/>
<line x1="682.5" y1="469" x2="682.5" y2="476" stroke="#bac0c7" stroke-width="1" stroke-dasharray="1 1"/>
<line x1="682.5" y1="480" x2="682.5" y2="652" stroke="#bac0c7" stroke-width="1" stroke-dasharray="1 1"/>
<line x1="701.5" y1="272" x2="701.5" y2="444" stroke="#bac0c7" stroke-width="1" stroke-dasharray="1 1"/>
<line x1="701.5" y1="445" x2="701.5" y2="452" stroke="#bac0c7" stroke-width="1" stroke-dasharray="1 1"/>
<line x1="701.5" y1="469" x2="701.5" y2="476" stroke="#bac0c7" stroke-width="1" stroke-dasharray="1 1"/>
<line x1="701.5" y1="480" x2="701.5" y2="652" stroke="#bac0c7" stroke-width="1" stroke-dasharray="1 1"/>
<line x1="720.5" y1="272" x2="720.5" y2="444" stroke="#bac0c7" stroke-width="1" stroke-dasharray="1 1"/>
<line x1="720.5" y1="445" x2="720.5" y2="452" stroke="#bac0c7" stroke-width="1" stroke-dasharray="1 1"/>
<line x1="720.5" y1="469" x2="720.5" y2="476" stroke="#bac0c7" stroke-width="1" stroke-dasharray="1 1"/>
<line x1="720.5" y1="480" x2="720.5" y2="652" stroke="#bac0c7" stroke-width="1" stroke-dasharray="1 1"/>
<line x1="739.5" y1="272" x2="739.5" y2="444" stroke="#bac0c7" stroke-width="1" stroke-dasharray="1 1"/>
<line x1="739.5" y1="445" x2="739.5" y2="452" stroke="#bac0c7" stroke-width="1" stroke-dasharray="1 1"/>
<line x1="739.5" y1="469" x2="739.5" y2="476" stroke="#bac0c7" stroke-width="1" stroke-dasharray="1 1"/>
<line x1="739.5" y1="480" x2="739.5" y2="652" stroke="#bac0c7" stroke-width="1" stroke-dasharray="1 1"/>
<line x1="758.5" y1="272" x2="758.5" y2="444" stroke="#bac0c7" stroke-width="1" stroke-dasharray="1 1"/>
<line x1="758.5" y1="445" x2="758.5" y2="452" stroke="#bac0c7" stroke-width="1" stroke-dasharray="1 1"/>
<line x1="758.5" y1="469" x2="758.5" y2="476" stroke="#bac0c7" stroke-width="1" stroke-dasharray="1 1"/>
<line x1="758.5" y1="480" x2="758.5" y2="652" stroke="#bac0c7" stroke-width="1" stroke-dasharray="1 1"/>
<line x1="777.5" y1="272" x2="777.5" y2="444" stroke="#bac0c7" stroke-width="1" stroke-dasharray="1 1"/>
<line x1="777.5" y1="445" x2="777.5" y2="452" stroke="#bac0c7" stroke-width="1" stroke-dasharray="1 1"/>
<line x1="777.5" y1="469" x2="777.5" y2="476" stroke="#bac0c7" stroke-width="1" stroke-dasharray="1 1"/>
<line x1="777.5" y1="480" x2="777.5" y2="652" stroke="#bac0c7" stroke-width="1" stroke-dasharray="1 1"/>
<line x1="796.5" y1="272" x2="796.5" y2="444" stroke="#bac0c7" stroke-width="1" stroke-dasharray="1 1"/>
<line x1="796.5" y1="445" x2="796.5" y2="452" stroke="#bac0c7" stroke-width="1" stroke-dasharray="1 1"/>
<line x1="796.5" y1="469" x2="796.5" y2="476" stroke="#bac0c7" stroke-width="1" stroke-dasharray="1 1"/>
<line x1="796.5" y1="480" x2="796.5" y2="652" stroke="#bac0c7" stroke-width="1" stroke-dasharray="1 1"/>
<line x1="815.5" y1="272" x2="815.5" y2="444" stroke="#bac0c7" stroke-width="1" stroke-dasharray="1 1"/>
<line x1="815.5" y1="445" x2="815.5" y2="452" stroke="#bac0c7" stroke-width="1" stroke-dasharray="1 1"/>
<line x1="815.5" y1="469" x2="815.5" y2="476" stroke="#bac0c7" stroke-width="1" stroke-dasharray="1 1"/>
<line x1="815.5" y1="480" x2="815.5" y2="652" stroke="#bac0c7" stroke-width="1" stroke-dasharray="1 1"/>
<line x1="834.5" y1="272" x2="834.5" y2="444" stroke="#bac0c7" stroke-width="1" stroke-dasharray="1 1"/>
<line x1="834.5" y1="445" x2="834.5" y2="452" stroke="#bac0c7" stroke-width="1" stroke-dasharray="1 1"/>
<line x1="834.5" y1="469" x2="834.5" y2="476" stroke="#bac0c7" stroke-width="1" stroke-dasharray="1 1"/>
<line x1="834.5" y1="480" x2="834.5" y2="652" stroke="#bac0c7" stroke-width="1" stroke-dasharray="1 1"/>
<line x1="853.5" y1="272" x2="853.5" y2="444" stroke="#bac0c7" stroke-width="1" stroke-dasharray="1 1"/>
<line x1="853.5" y1="445" x2="853.5" y2="452" stroke="#bac0c7" stroke-width="1" stroke-dasharray="1 1"/>
<line x1="853.5" y1="469" x2="853.5" y2="476" stroke="#bac0c7" stroke-width="1" stroke-dasharray="1 1"/>
<line x1="853.5" y1="480" x2="853.5" y2="652" stroke="#bac0c7" stroke-width="1" stroke-dasharray="1 1"/>
<line x1="872.5" y1="272" x2="872.5" y2="444" stroke="#bac0c7" stroke-width="1" stroke-dasharray="1 1"/>
<line x1="872.5" y1="445" x2="872.5" y2="452" stroke="#bac0c7" stroke-width="1" stroke-dasharray="1 1"/>
<line x1="872.5" y1="469" x2="872.5" y2="476" stroke="#bac0c7" stroke-width="1" stroke-dasharray="1 1"/>
<line x1="872.5" y1="480" x2="872.5" y2="652" stroke="#bac0c7" stroke-width="1" stroke-dasharray="1 1"/>
<line x1="891.5" y1="272" x2="891.5" y2="444" stroke="#bac0c7" stroke-width="1" stroke-dasharray="1 1"/>
<line x1="891.5" y1="445" x2="891.5" y2="452" stroke="#bac0c7" stroke-width="1" stroke-dasharray="1 1"/>
<line x1="891.5" y1="469" x2="891.5" y2="476" stroke="#bac0c7" stroke-width="1" stroke-dasharray="1 1"/>
<line x1="891.5" y1="480" x2="891.5" y2="652" stroke="#bac0c7" stroke-width="1" stroke-dasharray="1 1"/>
<line x1="910.5" y1="272" x2="910.5" y2="444" stroke="#bac0c7" stroke-width="1" stroke-dasharray="1 1"/>
<line x1="910.5" y1="445" x2="910.5" y2="452" stroke="#bac0c7" stroke-width="1" stroke-dasharray="1 1"/>
<line x1="910.5" y1="469" x2="910.5" y2="476" stroke="#bac0c7" stroke-width="1" stroke-dasharray="1 1"/>
<line x1="910.5" y1="480" x2="910.5" y2="652" stroke="#bac0c7" stroke-width="1" stroke-dasharray="1 1"/>
<rect x="352" y="407" width="15" height="38" fill="#fafeff" fill-opacity=".85"/>
<rect x="371" y="413" width="15" height="32" fill="#fafeff" fill-opacity=".85"/>
<rect x="390" y="409" width="15" height="36" fill="#fafeff" fill-opacity=".85"/>
<rect x="409" y="407" width="15" height="38" fill="#fafeff" fill-opacity=".85"/>
<rect x="428" y="403" width="15" height="42" fill="#fafeff" fill-opacity=".85"/>
<rect x="447" y="410" width="15" height="35" fill="#fafeff" fill-opacity=".85"/>
<rect x="466" y="400" width="15" height="45" fill="#fafeff" fill-opacity=".85"/>
<rect x="485" y="409" width="15" height="36" fill="#fafeff" fill-opacity=".85"/>
<rect x="504" y="401" width="15" height="44" fill="#fafeff" fill-opacity=".85"/>
<rect x="523" y="408" width="15" height="37" fill="#fafeff" fill-opacity=".85"/>
<rect x="542" y="413" width="15" height="32" fill="#fafeff" fill-opacity=".85"/>
<rect x="561" y="400" width="15" height="45" fill="#fafeff" fill-opacity=".85"/>
<rect x="580" y="404" width="15" height="41" fill="#fafeff" fill-opacity=".85"/>
<rect x="599" y="401" width="15" height="44" fill="#fafeff" fill-opacity=".85"/>
<rect x="618" y="407" width="15" height="38" fill="#fafeff" fill-opacity=".85"/>
<rect x="637" y="407" width="15" height="38" fill="#fafeff" fill-opacity=".85"/>
<rect x="656" y="413" width="15" height="32" fill="#fafeff" fill-opacity=".85"/>
<rect x="675" y="401" width="15" height="44" fill="#fafeff" fill-opacity=".85"/>
<rect x="694" y="408" width="15" height="37" fill="#fafeff" fill-opacity=".85"/>
<rect x="713" y="402" width="15" height="43" fill="#fafeff" fill-opacity=".85"/>
<rect x="732" y="410" width="15" height="35" fill="#fafeff" fill-opacity=".85"/>
<rect x="751" y="408" width="15" height="37" fill="#fafeff" fill-opacity=".85"/>
<rect x="770" y="410" width="15" height="35" fill="#fafeff" fill-opacity=".85"/>
<rect x="789" y="404" width="15" height="41" fill="#fafeff" fill-opacity=".85"/>
<rect x="808" y="407" width="15" height="38" fill="#fafeff" fill-opacity=".85"/>
<rect x="827" y="404" width="15" height="41" fill="#fafeff" fill-opacity=".85"/>
<rect x="846" y="396" width="15" height="49" fill="#fafeff" fill-opacity=".85"/>
<rect x="865" y="405" width="15" height="40" fill="#fafeff" fill-opacity=".85"/>
<rect x="884" y="412" width="15" height="33" fill="#fafeff" fill-opacity=".85"/>
<rect x="903" y="405" width="15" height="40" fill="#fafeff" fill-opacity=".85"/>
<rect x="352" y="493" width="15" height="160" fill="#e9ebf7" fill-opacity=".9"/>
<rect x="371" y="506" width="15" height="147" fill="#e9ebf7" fill-opacity=".9"/>
<rect x="390" y="518" width="15" height="135" fill="#e9ebf7" fill-opacity=".9"/>
<rect x="409" y="613" width="15" height="40" fill="#e9ebf7" fill-opacity=".9"/>
<rect x="428" y="550" width="15" height="103" fill="#e9ebf7" fill-opacity=".9"/>
<rect x="447" y="547" width="15" height="106" fill="#e9ebf7" fill-opacity=".9"/>
<rect x="466" y="542" width="15" height="111" fill="#e9ebf7" fill-opacity=".9"/>
<rect x="485" y="539" width="15" height="114" fill="#e9ebf7" fill-opacity=".9"/>
<rect x="504" y="495" width="15" height="158" fill="#e9ebf7" fill-opacity=".9"/>
<rect x="523" y="530" width="15" height="123" fill="#e9ebf7" fill-opacity=".9"/>
<rect x="542" y="612" width="15" height="41" fill="#e9ebf7" fill-opacity=".9"/>
<rect x="561" y="606" width="15" height="47" fill="#e9ebf7" fill-opacity=".9"/>
<rect x="580" y="622" width="15" height="31" fill="#e9ebf7" fill-opacity=".9"/>
<rect x="599" y="492" width="15" height="161" fill="#e9ebf7" fill-opacity=".9"/>
<rect x="618" y="492" width="15" height="161" fill="#e9ebf7" fill-opacity=".9"/>
<rect x="637" y="514" width="15" height="139" fill="#e9ebf7" fill-opacity=".9"/>
<rect x="656" y="499" width="15" height="154" fill="#e9ebf7" fill-opacity=".9"/>
<rect x="675" y="523" width="15" height="130" fill="#e9ebf7" fill-opacity=".9"/>
<rect x="694" y="626" width="15" height="27" fill="#e9ebf7" fill-opacity=".9"/>
<rect x="713" y="557" width="15" height="96" fill="#e9ebf7" fill-opacity=".9"/>
<rect x="732" y="495" width="15" height="158" fill="#e9ebf7" fill-opacity=".9"/>
<rect x="751" y="503" width="15" height="150" fill="#e9ebf7" fill-opacity=".9"/>
<rect x="770" y="495" width="15" height="158" fill="#e9ebf7" fill-opacity=".9"/>
<rect x="789" y="494" width="15" height="159" fill="#e9ebf7" fill-opacity=".9"/>
<rect x="808" y="503" width="15" height="150" fill="#e9ebf7" fill-opacity=".9"/>
<rect x="827" y="515" width="15" height="138" fill="#e9ebf7" fill-opacity=".9"/>
<rect x="846" y="554" width="15" height="99" fill="#e9ebf7" fill-opacity=".9"/>
<rect x="865" y="576" width="15" height="77" fill="#e9ebf7" fill-opacity=".9"/>
<rect x="884" y="528" width="15" height="125" fill="#e9ebf7" fill-opacity=".9"/>
<rect x="903" y="582" width="15" height="71" fill="#e9ebf7" fill-opacity=".9"/>
<line x1="342" y1="269.5" x2="928" y2="269.5" stroke="#c3c7cc" stroke-width="1"/>
<line x1="343" y1="270.5" x2="927" y2="270.5" stroke="#c3c7cc" stroke-width="1" stroke-dasharray="1 1"/>
<line x1="342" y1="444.5" x2="928" y2="444.5" stroke="#c3c7cc" stroke-width="1"/>
<line x1="342.5" y1="269" x2="342.5" y2="445" stroke="#c3c7cc" stroke-width="1"/>
<line x1="927.5" y1="269" x2="927.5" y2="445" stroke="#c3c7cc" stroke-width="1"/>
<line x1="342" y1="477.5" x2="928" y2="477.5" stroke="#c3c7cc" stroke-width="1"/>
<line x1="343" y1="478.5" x2="927" y2="478.5" stroke="#c3c7cc" stroke-width="1" stroke-dasharray="1 1"/>
<line x1="342" y1="652.5" x2="928" y2="652.5" stroke="#c3c7cc" stroke-width="1"/>
<line x1="342.5" y1="477" x2="342.5" y2="653" stroke="#c3c7cc" stroke-width="1"/>
<line x1="927.5" y1="477" x2="927.5" y2="653" stroke="#c3c7cc" stroke-width="1"/>
<rect x="353" y="408" width="13" height="20" fill="#cc0000"/><rect x="353" y="428" width="13" height="17" fill="#69ae23"/>
<rect x="372" y="414" width="13" height="15" fill="#cc0000"/><rect x="372" y="429" width="13" height="16" fill="#69ae23"/>
<rect x="391" y="410" width="13" height="16" fill="#cc0000"/><rect x="391" y="426" width="13" height="19" fill="#69ae23"/>
<rect x="410" y="408" width="13" height="21" fill="#cc0000"/><rect x="410" y="429" width="13" height="16" fill="#69ae23"/>
<rect x="429" y="404" width="13" height="20" fill="#cc0000"/><rect x="429" y="424" width="13" height="21" fill="#69ae23"/>
<rect x="448" y="411" width="13" height="16" fill="#cc0000"/><rect x="448" y="427" width="13" height="18" fill="#69ae23"/>
<rect x="467" y="401" width="13" height="22" fill="#cc0000"/><rect x="467" y="423" width="13" height="22" fill="#69ae23"/>
<rect x="486" y="410" width="13" height="17" fill="#cc0000"/><rect x="486" y="427" width="13" height="18" fill="#69ae23"/>
<rect x="505" y="402" width="13" height="19" fill="#cc0000"/><rect x="505" y="421" width="13" height="24" fill="#69ae23"/>
<rect x="524" y="409" width="13" height="18" fill="#cc0000"/><rect x="524" y="427" width="13" height="18" fill="#69ae23"/>
<rect x="543" y="414" width="13" height="18" fill="#cc0000"/><rect x="543" y="432" width="13" height="13" fill="#69ae23"/>
<rect x="562" y="401" width="13" height="24" fill="#cc0000"/><rect x="562" y="425" width="13" height="20" fill="#69ae23"/>
<rect x="581" y="405" width="13" height="28" fill="#cc0000"/><rect x="581" y="433" width="13" height="12" fill="#69ae23"/>
<rect x="600" y="402" width="13" height="19" fill="#cc0000"/><rect x="600" y="421" width="13" height="24" fill="#69ae23"/>
<rect x="619" y="408" width="13" height="18" fill="#cc0000"/><rect x="619" y="426" width="13" height="19" fill="#69ae23"/>
<rect x="638" y="408" width="13" height="19" fill="#cc0000"/><rect x="638" y="427" width="13" height="18" fill="#69ae23"/>
<rect x="657" y="414" width="13" height="14" fill="#cc0000"/><rect x="657" y="428" width="13" height="17" fill="#69ae23"/>
<rect x="676" y="402" width="13" height="18" fill="#cc0000"/><rect x="676" y="420" width="13" height="25" fill="#69ae23"/>
<rect x="695" y="409" width="13" height="22" fill="#cc0000"/><rect x="695" y="431" width="13" height="14" fill="#69ae23"/>
<rect x="714" y="403" width="13" height="19" fill="#cc0000"/><rect x="714" y="422" width="13" height="23" fill="#69ae23"/>
<rect x="733" y="411" width="13" height="14" fill="#cc0000"/><rect x="733" y="425" width="13" height="20" fill="#69ae23"/>
<rect x="752" y="409" width="13" height="17" fill="#cc0000"/><rect x="752" y="426" width="13" height="19" fill="#69ae23"/>
<rect x="771" y="411" width="13" height="17" fill="#cc0000"/><rect x="771" y="428" width="13" height="17" fill="#69ae23"/>
<rect x="790" y="405" width="13" height="20" fill="#cc0000"/><rect x="790" y="425" width="13" height="20" fill="#69ae23"/>
<rect x="809" y="408" width="13" height="20" fill="#cc0000"/><rect x="809" y="428" width="13" height="17" fill="#69ae23"/>
<rect x="828" y="405" width="13" height="20" fill="#cc0000"/><rect x="828" y="425" width="13" height="20" fill="#69ae23"/>
<rect x="847" y="397" width="13" height="22" fill="#cc0000"/><rect x="847" y="419" width="13" height="26" fill="#69ae23"/>
<rect x="866" y="406" width="13" height="18" fill="#cc0000"/><rect x="866" y="424" width="13" height="21" fill="#69ae23"/>
<rect x="885" y="413" width="13" height="16" fill="#cc0000"/><rect x="885" y="429" width="13" height="16" fill="#69ae23"/>
<rect x="904" y="406" width="13" height="19" fill="#cc0000"/><rect x="904" y="425" width="13" height="20" fill="#69ae23"/>
<rect x="353" y="494" width="13" height="18" fill="#a6de37"/><rect x="353" y="512" width="13" height="141" fill="#fad72d"/>
<rect x="372" y="507" width="13" height="17" fill="#a6de37"/><rect x="372" y="524" width="13" height="129" fill="#fad72d"/>
<rect x="391" y="519" width="13" height="20" fill="#a6de37"/><rect x="391" y="539" width="13" height="114" fill="#fad72d"/>
<rect x="410" y="614" width="13" height="17" fill="#a6de37"/><rect x="410" y="631" width="13" height="22" fill="#fad72d"/>
<rect x="429" y="551" width="13" height="22" fill="#a6de37"/><rect x="429" y="573" width="13" height="80" fill="#fad72d"/>
<rect x="448" y="548" width="13" height="19" fill="#a6de37"/><rect x="448" y="567" width="13" height="86" fill="#fad72d"/>
<rect x="467" y="543" width="13" height="23" fill="#a6de37"/><rect x="467" y="566" width="13" height="87" fill="#fad72d"/>
<rect x="486" y="540" width="13" height="19" fill="#a6de37"/><rect x="486" y="559" width="13" height="94" fill="#fad72d"/>
<rect x="505" y="496" width="13" height="25" fill="#a6de37"/><rect x="505" y="521" width="13" height="132" fill="#fad72d"/>
<rect x="524" y="531" width="13" height="19" fill="#a6de37"/><rect x="524" y="550" width="13" height="103" fill="#fad72d"/>
<rect x="543" y="613" width="13" height="14" fill="#a6de37"/><rect x="543" y="627" width="13" height="26" fill="#fad72d"/>
<rect x="562" y="607" width="13" height="20" fill="#a6de37"/><rect x="562" y="627" width="13" height="26" fill="#fad72d"/>
<rect x="581" y="623" width="13" height="13" fill="#a6de37"/><rect x="581" y="636" width="13" height="17" fill="#fad72d"/>
<rect x="600" y="493" width="13" height="25" fill="#a6de37"/><rect x="600" y="518" width="13" height="135" fill="#fad72d"/>
<rect x="619" y="493" width="13" height="20" fill="#a6de37"/><rect x="619" y="513" width="13" height="140" fill="#fad72d"/>
<rect x="638" y="515" width="13" height="19" fill="#a6de37"/><rect x="638" y="534" width="13" height="119" fill="#fad72d"/>
<rect x="657" y="500" width="13" height="17" fill="#a6de37"/><rect x="657" y="517" width="13" height="136" fill="#fad72d"/>
<rect x="676" y="524" width="13" height="26" fill="#a6de37"/><rect x="676" y="550" width="13" height="103" fill="#fad72d"/>
<rect x="695" y="627" width="13" height="15" fill="#a6de37"/><rect x="695" y="642" width="13" height="11" fill="#fad72d"/>
<rect x="714" y="558" width="13" height="24" fill="#a6de37"/><rect x="714" y="582" width="13" height="71" fill="#fad72d"/>
<rect x="733" y="496" width="13" height="21" fill="#a6de37"/><rect x="733" y="517" width="13" height="136" fill="#fad72d"/>
<rect x="752" y="504" width="13" height="20" fill="#a6de37"/><rect x="752" y="524" width="13" height="129" fill="#fad72d"/>
<rect x="771" y="496" width="13" height="19" fill="#a6de37"/><rect x="771" y="515" width="13" height="138" fill="#fad72d"/>
<rect x="790" y="495" width="13" height="20" fill="#a6de37"/><rect x="790" y="515" width="13" height="138" fill="#fad72d"/>
<rect x="809" y="504" width="13" height="18" fill="#a6de37"/><rect x="809" y="522" width="13" height="131" fill="#fad72d"/>
<rect x="828" y="516" width="13" height="21" fill="#a6de37"/><rect x="828" y="537" width="13" height="116" fill="#fad72d"/>
<rect x="847" y="555" width="13" height="27" fill="#a6de37"/><rect x="847" y="582" width="13" height="71" fill="#fad72d"/>
<rect x="866" y="577" width="13" height="23" fill="#a6de37"/><rect x="866" y="600" width="13" height="53" fill="#fad72d"/>
<rect x="885" y="529" width="13" height="17" fill="#a6de37"/><rect x="885" y="546" width="13" height="107" fill="#fad72d"/>
<rect x="904" y="583" width="13" height="21" fill="#a6de37"/><rect x="904" y="604" width="13" height="49" fill="#fad72d"/>
</g>
<g font-family='"Liberation Sans", sans-serif' font-size="10.67" fill="#000">
<text x="331.5" y="274.2" text-anchor="end">30</text>
<text x="331.5" y="303.2" text-anchor="end">25</text>
<text x="331.5" y="332.2" text-anchor="end">20</text>
<text x="331.5" y="361.2" text-anchor="end">15</text>
<text x="331.5" y="390.2" text-anchor="end">10</text>
<text x="331.5" y="419.2" text-anchor="end">5</text>
<text x="331.5" y="448.2" text-anchor="end">0</text>
<text x="331.5" y="482.2" text-anchor="end">30</text>
<text x="331.5" y="511.2" text-anchor="end">25</text>
<text x="331.5" y="540.2" text-anchor="end">20</text>
<text x="331.5" y="569.2" text-anchor="end">15</text>
<text x="331.5" y="598.2" text-anchor="end">10</text>
<text x="331.5" y="627.2" text-anchor="end">5</text>
<text x="331.5" y="656.2" text-anchor="end">0</text>
<text transform="translate(364.1,466.9) rotate(-90)">1</text>
<text transform="translate(383.1,466.9) rotate(-90)">2</text>
<text transform="translate(402.1,466.9) rotate(-90)">3</text>
<text transform="translate(421.1,466.9) rotate(-90)">4</text>
<text transform="translate(440.1,466.9) rotate(-90)">5</text>
<text transform="translate(459.1,466.9) rotate(-90)">6</text>
<text transform="translate(478.1,466.9) rotate(-90)">7</text>
<text transform="translate(497.1,466.9) rotate(-90)">8</text>
<text transform="translate(516.1,466.9) rotate(-90)">9</text>
<text transform="translate(535.1,466.9) rotate(-90)">10</text>
<text transform="translate(554.1,466.9) rotate(-90)">11</text>
<text transform="translate(573.1,466.9) rotate(-90)">12</text>
<text transform="translate(592.1,466.9) rotate(-90)">13</text>
<text transform="translate(611.1,466.9) rotate(-90)">14</text>
<text transform="translate(630.1,466.9) rotate(-90)">15</text>
<text transform="translate(649.1,466.9) rotate(-90)">16</text>
<text transform="translate(668.1,466.9) rotate(-90)">17</text>
<text transform="translate(687.1,466.9) rotate(-90)">18</text>
<text transform="translate(706.1,466.9) rotate(-90)">19</text>
<text transform="translate(725.1,466.9) rotate(-90)">20</text>
<text transform="translate(744.1,466.9) rotate(-90)">21</text>
<text transform="translate(763.1,466.9) rotate(-90)">22</text>
<text transform="translate(782.1,466.9) rotate(-90)">23</text>
<text transform="translate(801.1,466.9) rotate(-90)">24</text>
<text transform="translate(820.1,466.9) rotate(-90)">25</text>
<text transform="translate(839.1,466.9) rotate(-90)">26</text>
<text transform="translate(858.1,466.9) rotate(-90)">27</text>
<text transform="translate(877.1,466.9) rotate(-90)">28</text>
<text transform="translate(896.1,466.9) rotate(-90)">29</text>
<text transform="translate(915.1,466.9) rotate(-90)">30</text>
<text transform="translate(314.2,463) rotate(-90)" text-anchor="middle">Energie [kWh]</text>
</g>
<g font-family='"Liberation Sans", sans-serif' font-size="13.2" font-weight="bold" fill="#9c9c9c" text-anchor="middle" letter-spacing="0.42">
<text x="612.7" y="258.7">Verbrauch</text><text x="612.7" y="671.7">Erzeugung</text></g>
<rect x="305.5" y="690.5" width="631" height="32" fill="#ffffff" fill-opacity="0.15" stroke="#c0c6cc" stroke-width="1" shape-rendering="crispEdges"/>
<rect x="310" y="695" width="14" height="13.5" fill="#cc0000"/><path d="M324 695 L324 708.5 L310 708.5 Z" fill="#69ae23"/>
<rect x="423" y="695" width="14" height="13.5" fill="#cc0000"/>
<rect x="516" y="695" width="14" height="13.5" fill="#69ae23"/>
<rect x="627" y="695" width="14" height="13.5" fill="#a6de37"/><path d="M641 695 L641 708.5 L627 708.5 Z" fill="#ffd200"/>
<rect x="727" y="695" width="14" height="13.5" fill="#a6de37"/>
<rect x="832" y="695" width="14" height="13.5" fill="#fad72d"/>
</svg>
<div class="t" style="left:329.70px;transform-origin:0 0;top:694.69px;font-size:11px;line-height:11px;font-weight:normal;color:#000;transform:scaleX(0.9720);">Monatsverbrauch</div>
<div class="t" style="left:329.70px;transform-origin:0 0;top:711.09px;font-size:11px;line-height:11px;font-weight:bold;color:#666;transform:scaleX(1.0965);">190,40 kWh</div>
<div class="t" style="left:442.90px;transform-origin:0 0;top:694.69px;font-size:11px;line-height:11px;font-weight:normal;color:#000;transform:scaleX(0.9565);">Netzbezug</div>
<div class="t" style="left:442.90px;transform-origin:0 0;top:711.09px;font-size:11px;line-height:11px;font-weight:bold;color:#666;transform:scaleX(1.0967);">92,16 kWh</div>
<div class="t" style="left:535.70px;transform-origin:0 0;top:694.69px;font-size:11px;line-height:11px;font-weight:normal;color:#000;transform:scaleX(0.9740);">Eigenversorgung</div>
<div class="t" style="left:535.70px;transform-origin:0 0;top:711.09px;font-size:11px;line-height:11px;font-weight:bold;color:#666;transform:scaleX(1.0967);">98,25 kWh</div>
<div class="t" style="left:646.60px;transform-origin:0 0;top:694.69px;font-size:11px;line-height:11px;font-weight:normal;color:#000;transform:scaleX(0.9876);">Monatsertrag</div>
<div class="t" style="left:646.60px;transform-origin:0 0;top:711.09px;font-size:11px;line-height:11px;font-weight:bold;color:#666;transform:scaleX(1.1015);">587,84 kWh</div>
<div class="t" style="left:746.60px;transform-origin:0 0;top:694.69px;font-size:11px;line-height:11px;font-weight:normal;color:#000;transform:scaleX(0.9735);">Eigenverbrauch</div>
<div class="t" style="left:746.60px;transform-origin:0 0;top:711.09px;font-size:11px;line-height:11px;font-weight:bold;color:#666;transform:scaleX(1.0967);">98,25 kWh</div>
<div class="t" style="left:851.70px;transform-origin:0 0;top:694.69px;font-size:11px;line-height:11px;font-weight:normal;color:#000;transform:scaleX(0.9628);">Netzeinspeisung</div>
<div class="t" style="left:851.70px;transform-origin:0 0;top:711.09px;font-size:11px;line-height:11px;font-weight:bold;color:#666;transform:scaleX(1.1015);">489,59 kWh</div>
<div class="a" style="left:547px;top:744px;width:19px;height:15px;background:linear-gradient(to bottom,#fff,#f0f0f0);border:1px solid #9a9a9a;border-radius:5px;box-shadow:1px 1px 1px rgba(0,0,0,.25);"></div>
<svg style="left:551px;top:744px" width="11" height="14" viewBox="0 0 11 14"><polygon points="7.3,3.4 7.3,10.8 2.7,7.1" fill="#0c4da2"/></svg>
<div class="a" style="left:570px;top:742px;width:104px;height:17px;background:#fff;border:1px solid #8a8a8a;border-radius:1px;"></div>
<div class="t" style="left:575.00px;transform-origin:0 0;top:745.59px;font-size:11px;line-height:11px;font-weight:normal;color:#000;transform:scaleX(0.9748);">Juni 2020</div>
<svg style="left:658px;top:746.5px" width="12" height="9" viewBox="0 0 12 9"><path d="M1.6 2 L6 6.6 L10.4 2" fill="none" stroke="#000" stroke-width="1.9"/></svg>
<div class="a" style="left:677px;top:744px;width:19px;height:15px;background:linear-gradient(to bottom,#fff,#f0f0f0);border:1px solid #9a9a9a;border-radius:5px;box-shadow:1px 1px 1px rgba(0,0,0,.25);"></div>
<svg style="left:681px;top:744px" width="11" height="14" viewBox="0 0 11 14"><polygon points="3.7,3.4 3.7,10.8 8.3,7.1" fill="#0c4da2"/></svg>
<svg style="left:935px;top:741px" width="18" height="18" viewBox="0 0 18 18">
<path d="M12.39 8.05 L14.20 7.92 L14.20 10.28 L12.39 10.15 L11.73 11.74 L13.10 12.93 L11.43 14.60 L10.24 13.23 L8.65 13.89 L8.78 15.70 L6.42 15.70 L6.55 13.89 L4.96 13.23 L3.77 14.60 L2.10 12.93 L3.47 11.74 L2.81 10.15 L1.00 10.28 L1.00 7.92 L2.81 8.05 L3.47 6.46 L2.10 5.27 L3.77 3.60 L4.96 4.97 L6.55 4.31 L6.42 2.50 L8.78 2.50 L8.65 4.31 L10.24 4.97 L11.43 3.60 L13.10 5.27 L11.73 6.46 Z" fill="#ececec" stroke="#a9a9a9" stroke-width=".9" stroke-linejoin="round"/><circle cx="7.6" cy="9.1" r="1.9" fill="#fff" stroke="#a0a0a0" stroke-width=".9"/>
<polygon points="9.1,5.8 17,5.8 13.3,1" fill="#0a5fc8"/></svg>
<div class="a" style="left:292px;top:774px;width:660px;height:180px;background:#fff;border:1px solid #c2c2c2;border-radius:11px 11px 0 0;overflow:hidden;"></div>
<div class="a" style="left:293px;top:775px;width:658px;height:29px;background:linear-gradient(to bottom,#ffffff 0,#f4f4f4 35%,#e2e2e2 65%,#dcdcdc 100%);border-radius:10px 10px 0 0;border-bottom:1px solid #c2c2c2;"></div>
<div class="a" style="left:293px;top:951px;width:658px;height:3px;background:#e6e6e6;border-top:1px solid #c9c9c9;"></div>
<svg style="left:301px;top:785.8px" width="9" height="7" viewBox="0 0 9 7"><polygon points="0.8,1.6 7.8,1.6 4.3,5.6" fill="#666"/></svg>
<div class="t" style="left:312.20px;transform-origin:0 0;top:783.59px;font-size:11px;line-height:11px;font-weight:bold;color:#555;transform:scaleX(1.0497);">Bilanz</div>
<svg style="left:0;top:0" width="1920" height="1080" viewBox="0 0 1920 1080">
<rect x="314" y="823" width="14" height="13.5" fill="#cc0000"/><path d="M328 823 L328 836.5 L314 836.5 Z" fill="#69ae23"/>
<rect x="314" y="849" width="14" height="13.5" fill="#cc0000"/>
<rect x="314" y="875" width="14" height="13.5" fill="#69ae23"/>
<rect x="645" y="823" width="14" height="13.5" fill="#a6de37"/><path d="M659 823 L659 836.5 L645 836.5 Z" fill="#ffd200"/>
<rect x="645" y="849" width="14" height="13.5" fill="#a6de37"/>
<rect x="645" y="875" width="14" height="13.5" fill="#fad72d"/>
</svg>
<div class="t" style="left:335.10px;transform-origin:0 0;top:825.69px;font-size:11px;line-height:11px;font-weight:normal;color:#000;transform:scaleX(0.9826);">Monatsverbrauch</div>
<div class="t" style="right:1321.50px;transform-origin:100% 0;top:825.69px;font-size:11px;line-height:11px;font-weight:bold;color:#555;transform:scaleX(1.1099);">190,40 kWh</div>
<div class="a" style="left:311px;top:843px;width:291px;height:1px;background:#b8b8b8;"></div>
<div class="t" style="left:335.10px;transform-origin:0 0;top:851.69px;font-size:11px;line-height:11px;font-weight:normal;color:#000;transform:scaleX(0.9622);">Netzbezug</div>
<div class="t" style="right:1321.50px;transform-origin:100% 0;top:851.69px;font-size:11px;line-height:11px;font-weight:bold;color:#555;transform:scaleX(1.1060);">92,16 kWh</div>
<div class="a" style="left:311px;top:869px;width:291px;height:1px;background:#b8b8b8;"></div>
<div class="t" style="left:335.10px;transform-origin:0 0;top:877.69px;font-size:11px;line-height:11px;font-weight:normal;color:#000;transform:scaleX(0.9740);">Eigenversorgung</div>
<div class="t" style="right:1321.50px;transform-origin:100% 0;top:877.69px;font-size:11px;line-height:11px;font-weight:bold;color:#555;transform:scaleX(1.1060);">98,25 kWh</div>
<div class="a" style="left:311px;top:901px;width:291px;height:2px;background:linear-gradient(to bottom,#a8a8a8,#c4c4c4);"></div>
<div class="t" style="left:335.10px;transform-origin:0 0;top:915.69px;font-size:11px;line-height:11px;font-weight:normal;color:#000;transform:scaleX(0.9945);">Autarkiequote</div>
<div class="t" style="right:1321.50px;transform-origin:100% 0;top:915.69px;font-size:11px;line-height:11px;font-weight:bold;color:#555;transform:scaleX(1.1966);">52 %</div>
<div class="t" style="left:666.00px;transform-origin:0 0;top:825.69px;font-size:11px;line-height:11px;font-weight:normal;color:#000;transform:scaleX(0.9923);">Monatsertrag</div>
<div class="t" style="right:990.50px;transform-origin:100% 0;top:825.69px;font-size:11px;line-height:11px;font-weight:bold;color:#555;transform:scaleX(1.1099);">587,84 kWh</div>
<div class="a" style="left:642px;top:843px;width:291px;height:1px;background:#b8b8b8;"></div>
<div class="t" style="left:666.00px;transform-origin:0 0;top:851.69px;font-size:11px;line-height:11px;font-weight:normal;color:#000;transform:scaleX(0.9735);">Eigenverbrauch</div>
<div class="t" style="right:990.50px;transform-origin:100% 0;top:851.69px;font-size:11px;line-height:11px;font-weight:bold;color:#555;transform:scaleX(1.1060);">98,25 kWh</div>
<div class="a" style="left:642px;top:869px;width:291px;height:1px;background:#b8b8b8;"></div>
<div class="t" style="left:666.00px;transform-origin:0 0;top:877.69px;font-size:11px;line-height:11px;font-weight:normal;color:#000;transform:scaleX(0.9677);">Netzeinspeisung</div>
<div class="t" style="right:990.50px;transform-origin:100% 0;top:877.69px;font-size:11px;line-height:11px;font-weight:bold;color:#555;transform:scaleX(1.1099);">489,59 kWh</div>
<div class="a" style="left:642px;top:901px;width:291px;height:2px;background:linear-gradient(to bottom,#a8a8a8,#c4c4c4);"></div>
<div class="t" style="left:666.00px;transform-origin:0 0;top:915.69px;font-size:11px;line-height:11px;font-weight:normal;color:#000;transform:scaleX(0.9785);">Eigenverbrauchsquote</div>
<div class="t" style="right:990.50px;transform-origin:100% 0;top:915.69px;font-size:11px;line-height:11px;font-weight:bold;color:#555;transform:scaleX(1.1966);">17 %</div>
</body></html>
